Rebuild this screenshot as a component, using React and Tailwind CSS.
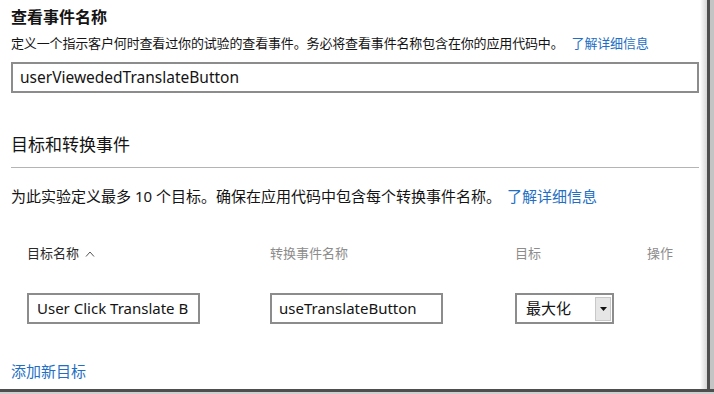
export default function App() {
  const font = { fontFamily: '"Noto Sans", "Noto Sans CJK SC", sans-serif' };
  return (
    <div className="w-[714px] h-[394px] bg-white flex flex-col overflow-hidden text-[#141414]" style={font}>
      <div className="flex flex-1 min-h-0">
        <div className="w-[700px] pl-[11px] pr-[1px] flex flex-col">
          <div className="pt-[7px] text-[16px] leading-[20px] font-bold">查看事件名称</div>
          <div className="mt-[7px] text-[13px] leading-[18px] whitespace-nowrap tracking-[-0.15px]">
            定义一个指示客户何时查看过你的试验的查看事件。务必将查看事件名称包含在你的应用代码中。
            <span className="ml-[8px] text-[#1f6fc4]">了解详细信息</span>
          </div>
          <div className="mt-[10px] h-[31px] border-2 border-[#8c8c8c] flex items-center pl-[7px] text-[15.5px]">
            userViewededTranslateButton
          </div>
          <div className="mt-[40px] text-[17px] leading-[24px]">目标和转换事件</div>
          <div className="mt-[10px] h-px bg-[#b4b4b4]" />
          <div className="mt-[18px] text-[15px] leading-[20px] whitespace-nowrap">
            为此实验定义最多 10 个目标。确保在应用代码中包含每个转换事件名称。
            <span className="ml-[6px] text-[#1f6fc4]">了解详细信息</span>
          </div>
          <div className="mt-[38px] pl-[16px] flex text-[13px] leading-[18px]">
            <div className="w-[243px] flex items-center gap-[6px] text-[#2a2a2a]">
              <span>目标名称</span>
              <svg width="10" height="6" viewBox="0 0 10 6" className="mt-[1px]">
                <polyline points="1,5.5 5,1 9,5.5" fill="none" stroke="#555" strokeWidth="1" />
              </svg>
            </div>
            <div className="w-[245px] text-[#8c8c8c]">转换事件名称</div>
            <div className="w-[132px] text-[#8c8c8c]">目标</div>
            <div className="text-[#8c8c8c]">操作</div>
          </div>
          <div className="mt-[31px] pl-[16px] flex text-[15px]">
            <div className="w-[243px]">
              <div className="w-[173px] h-[31px] border-2 border-[#8c8c8c] flex items-center pl-[8px] overflow-hidden whitespace-nowrap">
                User Click Translate B
              </div>
            </div>
            <div className="w-[245px]">
              <div className="w-[173px] h-[31px] border-2 border-[#8c8c8c] flex items-center pl-[7px] overflow-hidden whitespace-nowrap">
                useTranslateButton
              </div>
            </div>
            <div className="w-[99px] h-[31px] border-2 border-[#8c8c8c] flex items-center justify-between pl-[9px] pr-[1px]">
              <span>最大化</span>
              <div className="w-[16px] h-[24px] bg-[#e6e6e6] border border-[#c8c8c8] flex items-center justify-center">
                <svg width="7" height="4" viewBox="0 0 7 4">
                  <polygon points="0,0 7,0 3.5,4" fill="#111" />
                </svg>
              </div>
            </div>
          </div>
          <div className="mt-[37px] text-[15px] leading-[20px] text-[#1f6fc4]">添加新目标</div>
        </div>
        <div className="w-[7px] bg-gradient-to-r from-white to-[#d6d6d6]" />
        <div className="w-[3px] bg-[#4e4e4e]" />
        <div className="w-[4px] bg-[#c4c4c4]" />
      </div>
      <div className="h-[3px] bg-[#4e4e4e]" />
      <div className="h-[2px] bg-[#cfcfcf]" />
    </div>
  );
}
